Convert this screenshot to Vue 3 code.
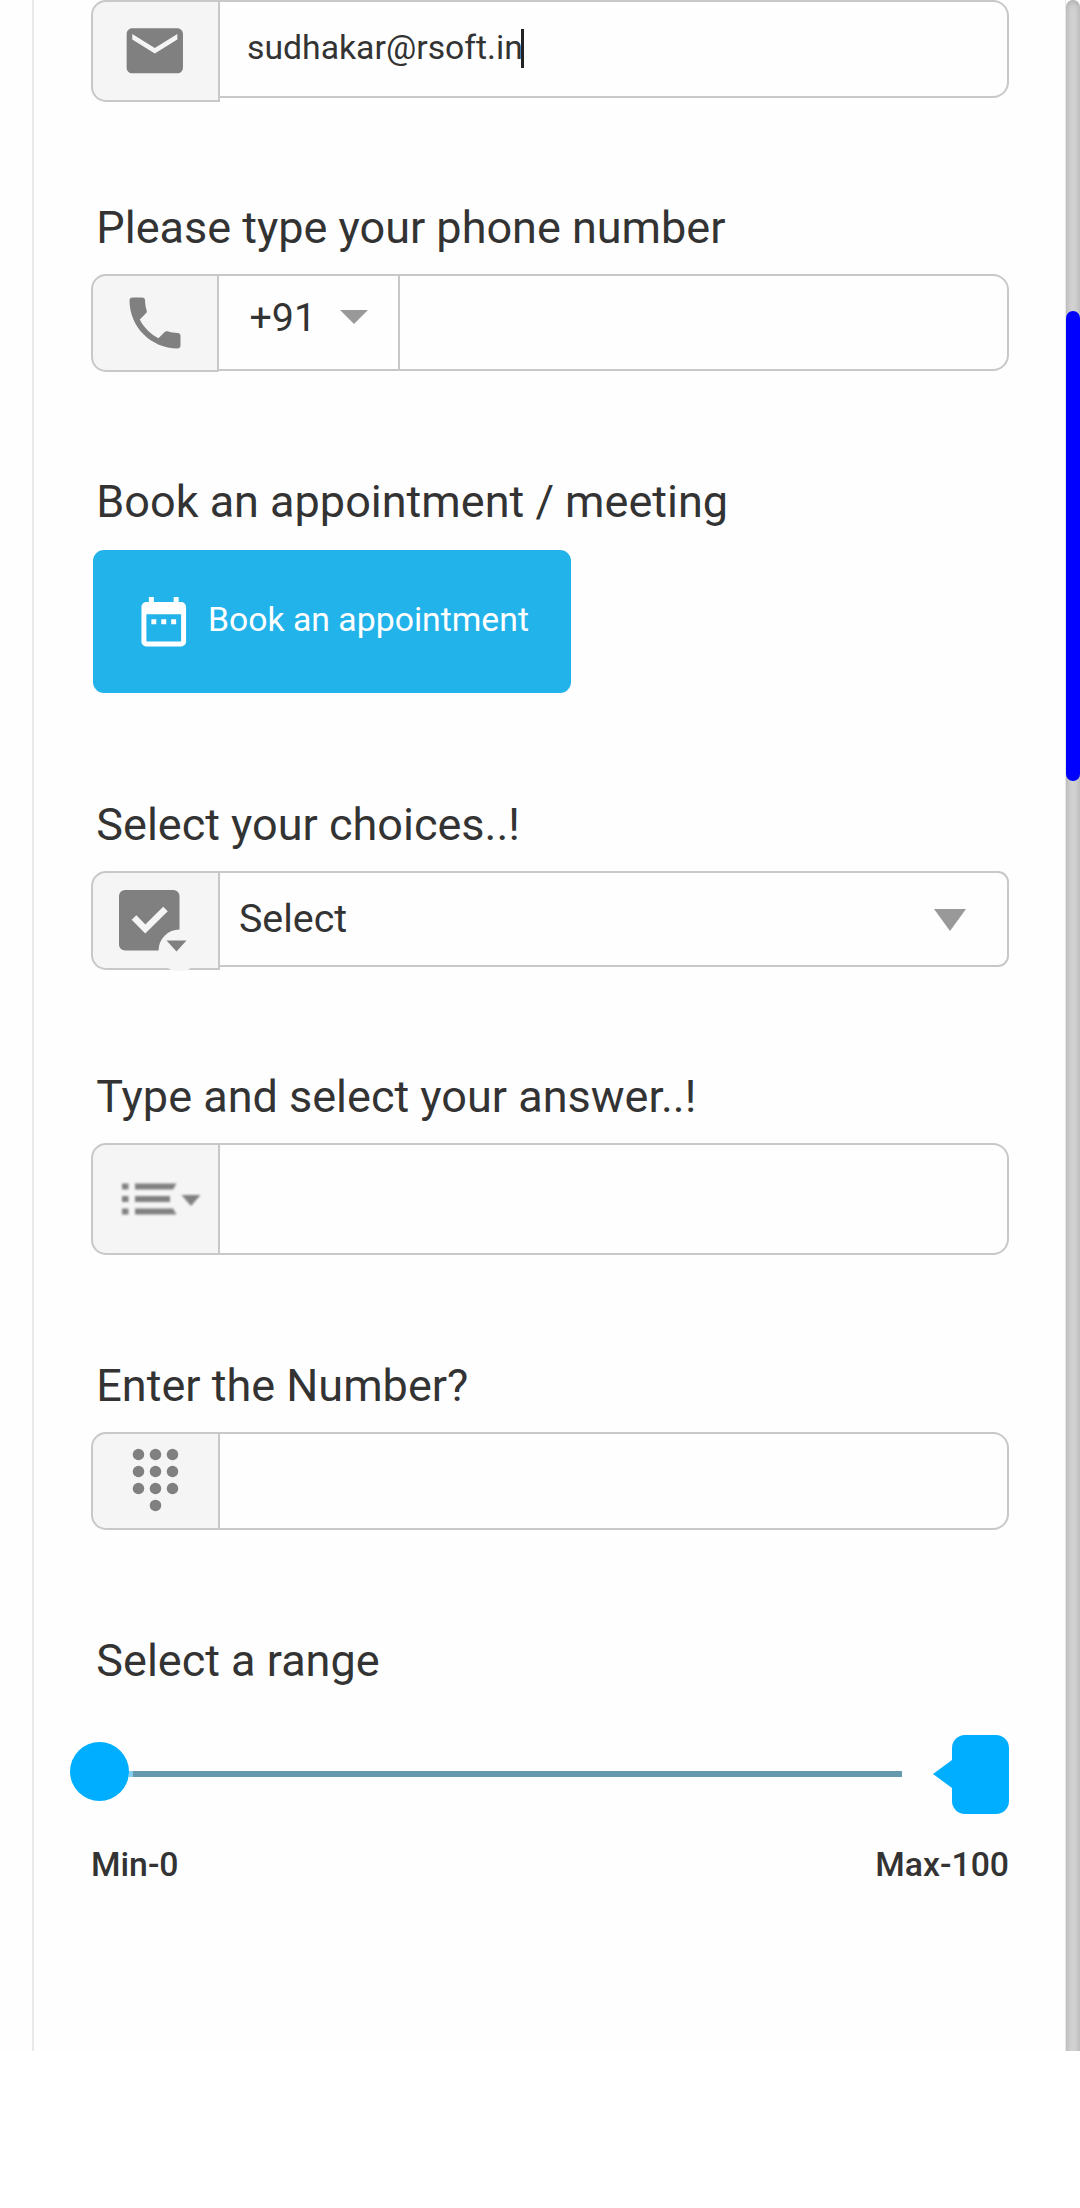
<script setup>
const dots = [
  [6.5, 6.5], [23.5, 6.5], [40.5, 6.5],
  [6.5, 23.5], [23.5, 23.5], [40.5, 23.5],
  [6.5, 40.5], [23.5, 40.5], [40.5, 40.5],
  [23.5, 57.4],
]
</script>

<template>
  <div class="screen">
    <main class="form">
      <div class="group email">
        <div class="addon">
          <svg width="67.6" height="67.6" viewBox="0 0 24 24">
            <path d="M20 4H4c-1.1 0-1.99.9-1.99 2L2 18c0 1.100.9 2 2 2h16c1.100 0 2-.9 2-2V6c0-1.100-.9-2-2-2zm0 4l-8 5-8-5V6l8 5 8-5v2z" />
          </svg>
        </div>
        <div class="input"><span class="email-text">sudhakar@rsoft.in</span><i class="caret"></i></div>
      </div>

      <label class="label l-phone">Please type your phone number</label>
      <div class="group phone">
        <div class="addon">
          <svg width="68" height="68" viewBox="0 0 24 24">
            <path d="M6.620 10.790c1.440 2.830 3.760 5.140 6.590 6.590l2.200-2.200c.27-.27.67-.36 1.020-.24 1.120.37 2.330.57 3.570.57.550 0 1 .45 1 1V20c0 .55-.45 1-1 1-9.390 0-17-7.610-17-17 0-.55.45-1 1-1h3.500c.55 0 1 .45 1 1 0 1.250.2 2.450.57 3.570.11.35.03.74-.25 1.020l-2.200 2.200z" />
          </svg>
        </div>
        <div class="code">
          <span>+91</span>
          <svg width="28" height="14" viewBox="0 0 28 14"><path fill="#999" d="M0 0h28L14 14z" /></svg>
        </div>
        <div class="input"></div>
      </div>

      <label class="label l-book">Book an appointment / meeting</label>
      <button class="book" type="button">
        <svg width="59.500" height="59.500" viewBox="0 0 24 24">
          <path fill="#fff" d="M9 11H7v2h2v-2zm4 0h-2v2h2v-2zm4 0h-2v2h2v-2zm2-7h-1V2h-2v2H8V2H6v2H5c-1.110 0-1.990.9-1.990 2L3 20c0 1.100.89 2 2 2h14c1.100 0 2-.9 2-2V6c0-1.100-.9-2-2-2zm0 16H5V9h14v11z" />
        </svg>
        <span>Book an appointment</span>
      </button>

      <label class="label l-choice">Select your choices..!</label>
      <div class="group choice">
        <div class="addon">
          <svg class="check" width="82" height="81" viewBox="0 0 82 81">
            <rect x="0" y="0" width="60.500" height="60.500" rx="6" />
            <path d="M15 27.500L26.300 39L46.500 19" fill="none" stroke="#f5f5f5" stroke-width="6.500" />
            <circle cx="60.500" cy="60.500" r="21" fill="#f5f5f5" />
            <path d="M47.500 50.500h20l-10 11z" />
          </svg>
        </div>
        <div class="input">
          <span>Select</span>
          <svg width="32" height="22" viewBox="0 0 32 22"><path fill="#999" d="M0 0h32L16 22z" /></svg>
        </div>
      </div>

      <label class="label l-answer">Type and select your answer..!</label>
      <div class="group answer">
        <div class="addon">
          <svg class="list" width="79" height="32" viewBox="0 0 79 32">
            <path d="M0 .5h6.500v6H0zM0 13h6.500v6H0zM0 25.500h6.500v6H0zM13 .5h41.500l-3.500 6H13zM13 13h35v6H13zM13 25.500h38l3.500 6H13zM59.500 12h19l-9.500 11z" />
          </svg>
        </div>
        <div class="input"></div>
      </div>

      <label class="label l-number">Enter the Number?</label>
      <div class="group number">
        <div class="addon">
          <svg class="pad" width="47" height="64" viewBox="0 0 47 64">
            <circle v-for="([x, y], i) in dots" :key="i" :cx="x" :cy="y" r="5.750" />
          </svg>
        </div>
        <div class="input"></div>
      </div>

      <label class="label l-range">Select a range</label>
      <div class="range">
        <i class="knob"></i>
        <i class="filled"></i>
        <i class="rail"></i>
        <svg width="19" height="28" viewBox="0 0 19 28"><path fill="#00aeff" d="M19 0v28L0 14z" /></svg>
        <i class="bubble"></i>
      </div>
      <div class="limits"><span>Min-0</span><span>Max-100</span></div>
    </main>
    <div class="track"><div class="thumb"></div></div>
  </div>
</template>

<style>
body {
  margin: 0;
  background: #fff;
}
</style>

<style scoped>
.screen {
  box-sizing: border-box;
  width: 1080px;
  height: 2051px;
  padding-left: 32px;
  display: flex;
  overflow: hidden;
  background: #fefefe;
  color: #333;
  font-family: Roboto, sans-serif;
}
.form {
  box-sizing: border-box;
  width: 1034px;
  height: 2051px;
  padding: 0 56px 0 57px;
  border-left: 2px solid #e8e8e8;
  border-right: 1px solid #e8e8e8;
  display: flex;
  flex-direction: column;
}
.form > * {
  flex-shrink: 0;
}
svg {
  display: block;
  flex-shrink: 0;
  fill: #808080;
}
.label {
  display: block;
  height: 54px;
  padding-left: 5.300px;
  font-size: 45px;
  line-height: 54px;
  white-space: nowrap;
}
.l-phone { margin: 99px 0 19px; }
.l-book { margin: 103px 0 21px; }
.l-choice { margin: 105px 0 19px; }
.l-answer { margin: 100px 0 19px; }
.l-number { margin: 104px 0 19px; }
.l-range { margin: 104px 0 47px; }

.group {
  display: flex;
  align-items: flex-start;
  width: 918px;
}
.addon {
  box-sizing: border-box;
  width: 129px;
  height: 100%;
  padding-right: 1px;
  border: 2px solid #c8c8c8;
  border-radius: 15px 0 0 15px;
  background: #f5f5f5;
  display: flex;
  align-items: center;
  justify-content: center;
  flex-shrink: 0;
}
.input {
  box-sizing: border-box;
  flex: 1;
  height: 98px;
  border: 2px solid #c8c8c8;
  border-left: 0;
  border-radius: 0 16px 16px 0;
  display: flex;
}
.email { height: 102px; }
.email .input {
  padding: 26px 0 0 27px;
}
.email .addon { padding-bottom: 1px; }
.email-text {
  font-size: 33.750px;
  line-height: 40px;
}
.caret {
  width: 3px;
  height: 39px;
  margin: 1px 0 0 -2px;
  background: #222;
}
.phone { height: 98px; }
.phone .input { height: 97px; }
.phone .addon {
  width: 128px;
  padding-right: 0;
}
.code {
  box-sizing: border-box;
  width: 181px;
  height: 97px;
  padding: 0 30px 11px 30.500px;
  border: 2px solid #c8c8c8;
  border-left: 0;
  display: flex;
  align-items: center;
  justify-content: space-between;
  font-size: 39.375px;
}
.code span { padding-top: 1px; }
.book {
  box-sizing: border-box;
  width: 478px;
  height: 143px;
  margin-left: 2px;
  padding: 0 0 0 41px;
  border: 0;
  border-radius: 11px;
  background: #22b3ea;
  color: #fff;
  font: 33.750px/40px Roboto, sans-serif;
  display: flex;
  align-items: center;
}
.book span {
  margin: 0 0 4px 14.500px;
  white-space: nowrap;
}
.choice { height: 99px; }
.choice .addon {
  align-items: flex-start;
  justify-content: flex-start;
}
.check {
  margin: 17px 0 0 26px;
  filter: blur(0.6px);
}
.choice .input {
  height: 96px;
  padding: 1px 41px 0 19px;
  border-radius: 0 11px 11px 0;
  align-items: center;
  justify-content: space-between;
  font-size: 39.375px;
}
.choice .input span { margin-bottom: 3px; }
.choice .input svg { margin-top: 1px; }
.answer { height: 112px; }
.answer .input { height: 112px; }
.list {
  margin-left: 12px;
  filter: blur(0.8px);
}
.number { height: 98px; }
.pad { margin-bottom: 2px; }

.range {
  width: 939px;
  height: 79px;
  margin-left: -21px;
  display: flex;
  align-items: center;
}
.range svg { margin-bottom: 1px; }
.knob {
  width: 59px;
  height: 59px;
  margin-bottom: 6px;
  border-radius: 50%;
  background: #00aeff;
}
.filled {
  width: 4px;
  height: 6px;
  margin-bottom: 1px;
  background: #85cdec;
}
.rail {
  width: 769px;
  height: 6px;
  margin: 0 31px 1px 0;
  background: #6699ad;
}
.bubble {
  width: 57px;
  height: 79px;
  border-radius: 13px;
  background: #00aeff;
}
.limits {
  display: flex;
  justify-content: space-between;
  margin-top: 31px;
  font-size: 33.750px;
  font-weight: 500;
  line-height: 40px;
}
.track {
  width: 14px;
  height: 2080px;
  flex-shrink: 0;
  padding-top: 311px;
  box-sizing: border-box;
  border-radius: 8px 8px 0 0;
  background: #d9d9d9;
  box-shadow: inset 0 0 10px #a0a0a0;
}
.thumb {
  height: 470px;
  border-radius: 7px;
  background: #00f;
}
</style>
